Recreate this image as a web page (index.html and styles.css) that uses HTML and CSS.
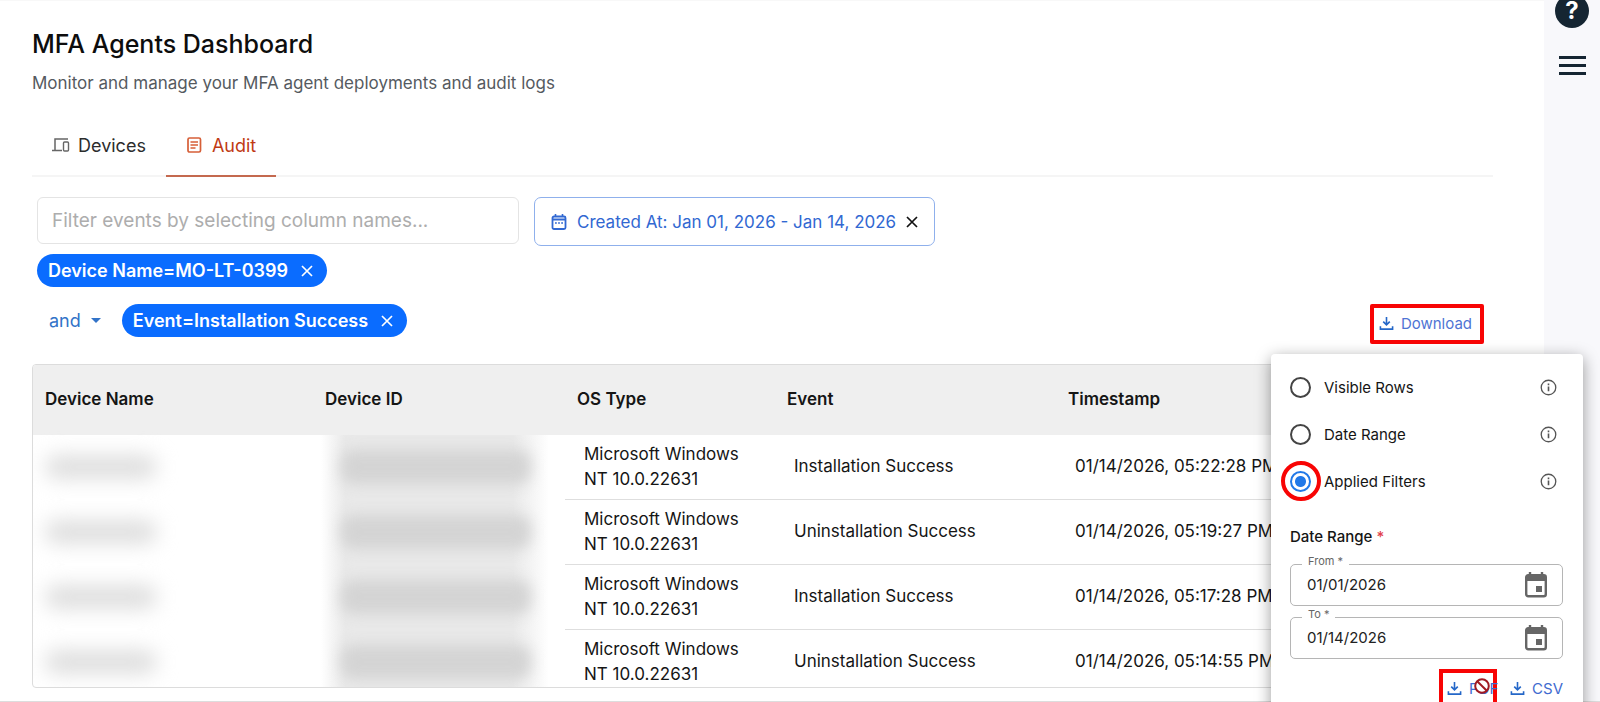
FILE: index.html
```html
<!DOCTYPE html>
<html lang="en">
<head>
<meta charset="utf-8">
<title>MFA Agents Dashboard</title>
<link rel="stylesheet" href="styles.css">
</head>
<body>
<svg class="sprite" aria-hidden="true">
  <symbol id="i-download" viewBox="0 0 16 16"><path d="M8 1v8M4.500 6 8 9.500 11.500 6M1.500 11v3h13v-3" fill="none" stroke="currentColor" stroke-width="1.700"/></symbol>
  <symbol id="i-info" viewBox="0 0 18 18"><circle cx="9" cy="9" r="7.700" fill="none" stroke="currentColor" stroke-width="1.400"/><path d="M9 8v5M9 4.800v1.800" stroke="currentColor" stroke-width="1.700"/></symbol>
  <symbol id="i-close" viewBox="0 0 12 12"><path d="M1 1l10 10M11 1 1 11" fill="none" stroke="currentColor" stroke-width="1.700"/></symbol>
  <symbol id="i-event" viewBox="0 0 24 26"><path d="M6 0v4M18 0v4" stroke="currentColor" stroke-width="2.400"/><rect x="2.200" y="3.200" width="19.600" height="21" rx="2" fill="none" stroke="currentColor" stroke-width="2.400"/><path d="M2 3h20v6H2z" fill="currentColor"/><path d="M12 14h6v6h-6z" fill="currentColor"/></symbol>
</svg>
<div class="app">
  <main class="main">
    <h1 class="title">MFA Agents Dashboard</h1>
    <p class="subtitle">Monitor and manage your MFA agent deployments and audit logs</p>

    <div class="tabs" role="tablist">
      <button class="tab" role="tab" aria-selected="false">
        <svg class="icon-tab" viewBox="0 0 18 16"><path d="M16 2H3v11M0 13.500h10" fill="none" stroke="#666" stroke-width="1.500"/><rect x="11.500" y="5" width="5" height="9" rx="1" fill="none" stroke="#666" stroke-width="1.400"/></svg>
        Devices
      </button>
      <button class="tab tab-active" role="tab" aria-selected="true">
        <svg class="icon-tab" viewBox="0 0 18 16"><rect x="2" y="1" width="12.500" height="14" rx="1.500" fill="none" stroke="#d65f38" stroke-width="1.700"/><path d="M4.500 5H12M4.500 8H12M4.500 11h5" stroke="#d65f38" stroke-width="1.400"/></svg>
        Audit
      </button>
    </div>

    <div class="filters">
      <input class="search" type="text" aria-label="Filter events" placeholder="Filter events by selecting column names...">
      <button class="date-filter">
        <svg class="icon-date" viewBox="0 0 16 16"><path d="M4.500 0v3M11.500 0v3" stroke="currentColor" stroke-width="1.600"/><rect x="1.500" y="2.500" width="13" height="12.500" rx="1.500" fill="none" stroke="currentColor" stroke-width="1.800"/><path d="M1.500 5.500h13" stroke="currentColor" stroke-width="2"/><path d="M4 9h1.800M7.100 9h1.800M10.200 9H12" stroke="currentColor" stroke-width="1.400"/></svg>
        Created At: Jan 01, 2026 - Jan 14, 2026
        <svg class="icon-close dark"><use href="#i-close"/></svg>
      </button>
    </div>

    <div class="chips">
      <div class="chip-row">
        <span class="chip">Device Name=MO-LT-0399 <button class="chip-remove" aria-label="Remove device filter"><svg class="icon-close"><use href="#i-close"/></svg></button></span>
      </div>
      <div class="chip-row">
        <button class="joiner">and <svg class="caret" viewBox="0 0 10 5"><path d="M0 0h10L5 5z" fill="currentColor"/></svg></button>
        <span class="chip">Event=Installation Success <button class="chip-remove" aria-label="Remove event filter"><svg class="icon-close"><use href="#i-close"/></svg></button></span>
        <div class="download-wrap">
          <button class="download"><svg class="icon-dl"><use href="#i-download"/></svg>Download</button>
          <form class="menu">
            <div class="option"><input class="radio" type="radio" name="scope" id="rows"><label for="rows">Visible Rows</label><svg class="icon-info"><use href="#i-info"/></svg></div>
            <div class="option"><input class="radio" type="radio" name="scope" id="range"><label for="range">Date Range</label><svg class="icon-info"><use href="#i-info"/></svg></div>
            <div class="option marked"><input class="radio" type="radio" name="scope" id="applied" checked><label for="applied">Applied Filters</label><svg class="icon-info"><use href="#i-info"/></svg></div>
            <p class="menu-title">Date Range <span class="req">*</span></p>
            <div class="field"><label class="field-label" for="from">From *</label><input class="field-input" id="from" type="text" value="01/01/2026"><svg class="icon-event"><use href="#i-event"/></svg></div>
            <div class="field"><label class="field-label" for="to">To *</label><input class="field-input" id="to" type="text" value="01/14/2026"><svg class="icon-event"><use href="#i-event"/></svg></div>
            <div class="exports">
              <button type="button" class="export export-marked"><svg class="icon-dl"><use href="#i-download"/></svg>PDF
                <svg class="blocked" viewBox="0 0 16 16"><circle cx="8" cy="8" r="6.800" fill="#fff" stroke="#a01a22" stroke-width="2"/><path d="M3.200 3.200l9.600 9.600" stroke="#a01a22" stroke-width="2"/></svg>
              </button>
              <button type="button" class="export"><svg class="icon-dl"><use href="#i-download"/></svg>CSV</button>
            </div>
          </form>
        </div>
      </div>
    </div>

    <div class="table-wrap">
      <table class="table">
        <colgroup><col class="c-name"><col class="c-id"><col class="c-os"><col class="c-event"><col></colgroup>
        <thead><tr><th>Device Name</th><th>Device ID</th><th>OS Type</th><th>Event</th><th>Timestamp</th></tr></thead>
        <tbody>
          <tr><td class="hidden-cell"><div class="smudge"></div></td><td class="hidden-cell hidden-id"><div class="smudge smudge-id"></div></td><td>Microsoft Windows<br>NT 10.0.22631</td><td>Installation Success</td><td>01/14/2026, 05:22:28 PM</td></tr>
          <tr><td class="hidden-cell"><div class="smudge"></div></td><td class="hidden-cell hidden-id"><div class="smudge smudge-id"></div></td><td>Microsoft Windows<br>NT 10.0.22631</td><td>Uninstallation Success</td><td>01/14/2026, 05:19:27 PM</td></tr>
          <tr><td class="hidden-cell"><div class="smudge"></div></td><td class="hidden-cell hidden-id"><div class="smudge smudge-id"></div></td><td>Microsoft Windows<br>NT 10.0.22631</td><td>Installation Success</td><td>01/14/2026, 05:17:28 PM</td></tr>
          <tr><td class="hidden-cell"><div class="smudge"></div></td><td class="hidden-cell hidden-id"><div class="smudge smudge-id"></div></td><td>Microsoft Windows<br>NT 10.0.22631</td><td>Uninstallation Success</td><td>01/14/2026, 05:14:55 PM</td></tr>
        </tbody>
      </table>
    </div>
  </main>
  <aside class="rail">
    <button class="help" aria-label="Help">?</button>
    <button class="burger" aria-label="Menu"><span class="bar"></span><span class="bar"></span><span class="bar"></span></button>
  </aside>
</div>
</body>
</html>
```
FILE: styles.css
```css
*, *::before { box-sizing: border-box; }
body {
  margin: 0;
  height: 100vh;
  overflow: hidden;
  background: #fff;
  color: #151515;
  font-family: Inter, "Liberation Sans", sans-serif;
  font-size: 17px;
}
button { margin: 0; padding: 0; border: 0; background: none; color: inherit; font: inherit; }
input { font: inherit; }
svg { flex: none; }
.sprite { position: absolute; width: 0; height: 0; }

.app { display: flex; height: 100vh; border-bottom: 1px solid #ddd; }
.main { flex: 1; min-width: 0; padding: 27px 51px 0 32px; border-top: 1px solid #f8f8f8; }
.title { margin: 0 0 11px; font-size: 25px; line-height: 32px; font-weight: 500; color: #0d0d0d; }
.subtitle { margin: 0; line-height: 24px; color: #555a5f; }

.tabs { display: flex; margin-top: 20px; border-bottom: 2px solid #f5f5f5; }
.tab {
  display: flex;
  align-items: center;
  gap: 8px;
  height: 62px;
  margin-bottom: -2px;
  padding: 0 20px;
  border-bottom: 2px solid transparent;
  color: #2c2c2c;
  font-size: 18px;
}
.tab-active { color: #bf3a14; border-bottom-color: #c4694f; }
.icon-tab { width: 18px; height: 16px; }

.filters { display: flex; align-items: flex-start; gap: 15px; margin-top: 20px; padding-left: 5px; }
.search {
  width: 482px;
  height: 47px;
  padding: 0 14px;
  border: 1px solid #e4e4e4;
  border-radius: 6px;
  font-size: 19px;
  outline: none;
}
.search::placeholder { color: #adadad; opacity: 1; }
.date-filter {
  display: flex;
  align-items: center;
  gap: 10px;
  height: 49px;
  padding: 0 16px;
  border: 1px solid #8fb0ec;
  border-radius: 7px;
  color: #3168d2;
}
.icon-date { width: 16px; height: 16px; }
.icon-close { display: block; width: 12px; height: 12px; }
.dark { color: #111; }

.chips { display: flex; flex-direction: column; gap: 17px; margin-top: 8px; padding-left: 5px; }
.chip-row { display: flex; align-items: center; height: 33px; }
.chip {
  display: flex;
  align-items: center;
  gap: 13px;
  height: 33px;
  padding: 0 14px 0 11px;
  border-radius: 17px;
  background: #0a6cff;
  color: #fff;
  font-size: 18px;
  font-weight: 600;
}
.joiner { display: flex; align-items: center; gap: 10px; padding: 0 21px 0 12px; color: #3273c8; font-size: 18px; }
.caret { width: 10px; height: 5px; }

.download-wrap { position: relative; margin: 0 9px 0 auto; }
.download {
  display: flex;
  align-items: center;
  gap: 7px;
  height: 40px;
  margin-top: 6px;
  padding: 0 8px 0 5px;
  border: 4px solid #f80404;
  border-radius: 2px;
  color: #4f74d4;
  font-size: 15px;
}
.icon-dl { width: 15px; height: 15px; color: #2467c8; }

.menu {
  position: absolute;
  z-index: 2;
  top: calc(100% + 10px);
  right: -99px;
  width: 312px;
  padding: 10px 20px 10px 19px;
  border-radius: 4px;
  background: #fff;
  box-shadow: 0 4px 16px rgba(0, 0, 0, .4);
  font-size: 15px;
}
.option { position: relative; display: flex; align-items: center; gap: 13px; height: 47px; padding-right: 6px; }
.option label { flex: 1; }
.radio {
  flex: none;
  appearance: none;
  width: 21px;
  height: 21px;
  margin: 0;
  border: 2px solid #444;
  border-radius: 50%;
}
.radio:checked { border-color: #2179e8; background: radial-gradient(circle, #2179e8 5px, #fff 6px); }
.marked::before {
  content: "";
  position: absolute;
  left: -9px;
  width: 40px;
  height: 40px;
  border: 4px solid #f80404;
  border-radius: 50%;
}
.icon-info { width: 17px; height: 17px; color: #555; }
.menu-title { margin: 22px 0 17px; line-height: 20px; font-weight: 500; }
.req { color: #e2404a; }
.field {
  position: relative;
  display: flex;
  align-items: center;
  height: 42px;
  margin-bottom: 11px;
  padding: 0 14px 0 16px;
  border: 1px solid #b5b5b5;
  border-radius: 5px;
}
.field-label {
  position: absolute;
  top: -11px;
  left: 11px;
  padding: 0 6px;
  background: #fff;
  color: #666;
  font-size: 11px;
  line-height: 14px;
}
.field-input { flex: 1; min-width: 0; padding: 0; border: 0; outline: none; background: none; color: #222; }
.icon-event { width: 24px; height: 26px; color: #666; }
.exports { display: flex; justify-content: flex-end; gap: 13px; margin-top: -1px; }
.export { position: relative; display: flex; align-items: center; gap: 7px; height: 40px; color: #3f6bd0; }
.export-marked { width: 58px; padding-left: 4px; border: 4px solid #f80404; white-space: nowrap; }
.blocked { position: absolute; top: 5px; left: 31px; width: 16px; height: 16px; }

.table-wrap { margin-top: 27px; height: 324px; overflow: hidden; border: 1px solid #dcdcdc; border-radius: 4px; }
.table { width: 100%; table-layout: fixed; border-collapse: separate; border-spacing: 0; }
.c-name { width: 280px; }
.c-id { width: 252px; }
.c-os { width: 210px; }
.c-event { width: 281px; }
th { height: 70px; padding: 0 12px 2px; background: #efefef; text-align: left; font-weight: 600; }
td { height: 65px; padding: 0 19px 1px; border-bottom: 1px solid #dedede; line-height: 25px; white-space: nowrap; }
.hidden-cell { padding: 0 12px; border-bottom-color: transparent; }
.hidden-id { background: linear-gradient(90deg, #fff 8px, #e9e9e9 32px, #e9e9e9 200px, #fff 236px); }
.smudge { width: 112px; height: 24px; border-radius: 12px; background: #dedede; filter: blur(10px); }
.smudge-id { width: 190px; height: 34px; margin-left: 16px; background: #d4d4d4; filter: blur(7px); }

.rail { display: flex; flex-direction: column; align-items: center; width: 56px; background: #f8f8fb; }
.help {
  width: 34px;
  height: 34px;
  margin-top: -6px;
  border-radius: 50%;
  background: #152532;
  color: #fff;
  font-size: 24px;
  line-height: 34px;
  font-weight: 700;
}
.burger { display: flex; flex-direction: column; gap: 5px; margin-top: 28px; }
.bar { width: 27px; height: 3px; background: #152532; }
```
